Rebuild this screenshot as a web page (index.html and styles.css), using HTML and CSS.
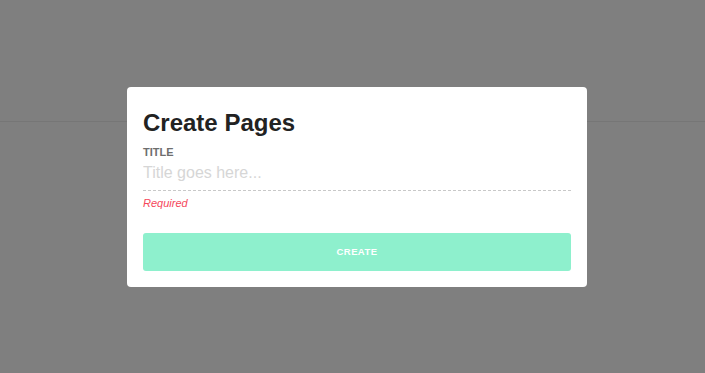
FILE: index.html
```html
<!DOCTYPE html>
<html lang="en">
<head>
<meta charset="utf-8">
<title>Create Pages</title>
<link rel="stylesheet" href="styles.css">
</head>
<body>
<header class="page-header"></header>
<div class="overlay">
  <form class="modal">
    <h2 class="modal-title">Create Pages</h2>
    <label class="field-label" for="title">TITLE</label>
    <input class="field-input" id="title" type="text" placeholder="Title goes here...">
    <div class="field-error">Required</div>
    <button class="create-btn" type="button">CREATE</button>
  </form>
</div>
</body>
</html>
```
FILE: styles.css
```css
html, body {
  margin: 0;
  padding: 0;
  height: 100%;
  background: #ffffff;
  font-family: "Liberation Sans", Arial, sans-serif;
}

.page-header {
  height: 122px;
  box-sizing: border-box;
  border-bottom: 1px solid #ececec;
}

.overlay {
  position: fixed;
  inset: 0;
  background: rgba(0, 0, 0, 0.5);
  display: flex;
  align-items: center;
  justify-content: center;
  padding-left: 9px;
}

.modal {
  width: 460px;
  box-sizing: border-box;
  background: #ffffff;
  border-radius: 4px;
  padding: 16px;
  display: flex;
  flex-direction: column;
  margin: 0;
}

.modal-title {
  margin: 0;
  padding-top: 2px;
  font-size: 24px;
  line-height: 36px;
  font-weight: bold;
  color: #222222;
}

.field-label {
  margin-top: 3px;
  font-size: 11px;
  line-height: 16px;
  font-weight: bold;
  color: #6e6e6e;
}

.field-input {
  margin: 0;
  height: 31px;
  box-sizing: border-box;
  padding: 3px 0 7px 0;
  border: none;
  border-bottom: 1px dashed #c8c8c8;
  outline: none;
  font-family: "Liberation Sans", Arial, sans-serif;
  font-size: 16px;
  line-height: 20px;
  color: #333333;
  background: transparent;
}

.field-input::placeholder {
  color: #d6d6d6;
  opacity: 1;
}

.field-error {
  margin-top: 4px;
  font-size: 11px;
  line-height: 16px;
  font-style: italic;
  color: #f5475b;
}

.create-btn {
  margin-top: 22px;
  height: 38px;
  border: none;
  border-radius: 3px;
  background: #8ef0cd;
  color: #ffffff;
  font-family: "Liberation Sans", Arial, sans-serif;
  font-size: 9.5px;
  font-weight: bold;
  letter-spacing: 0.4px;
  display: flex;
  align-items: center;
  justify-content: center;
  padding: 0;
}
```
